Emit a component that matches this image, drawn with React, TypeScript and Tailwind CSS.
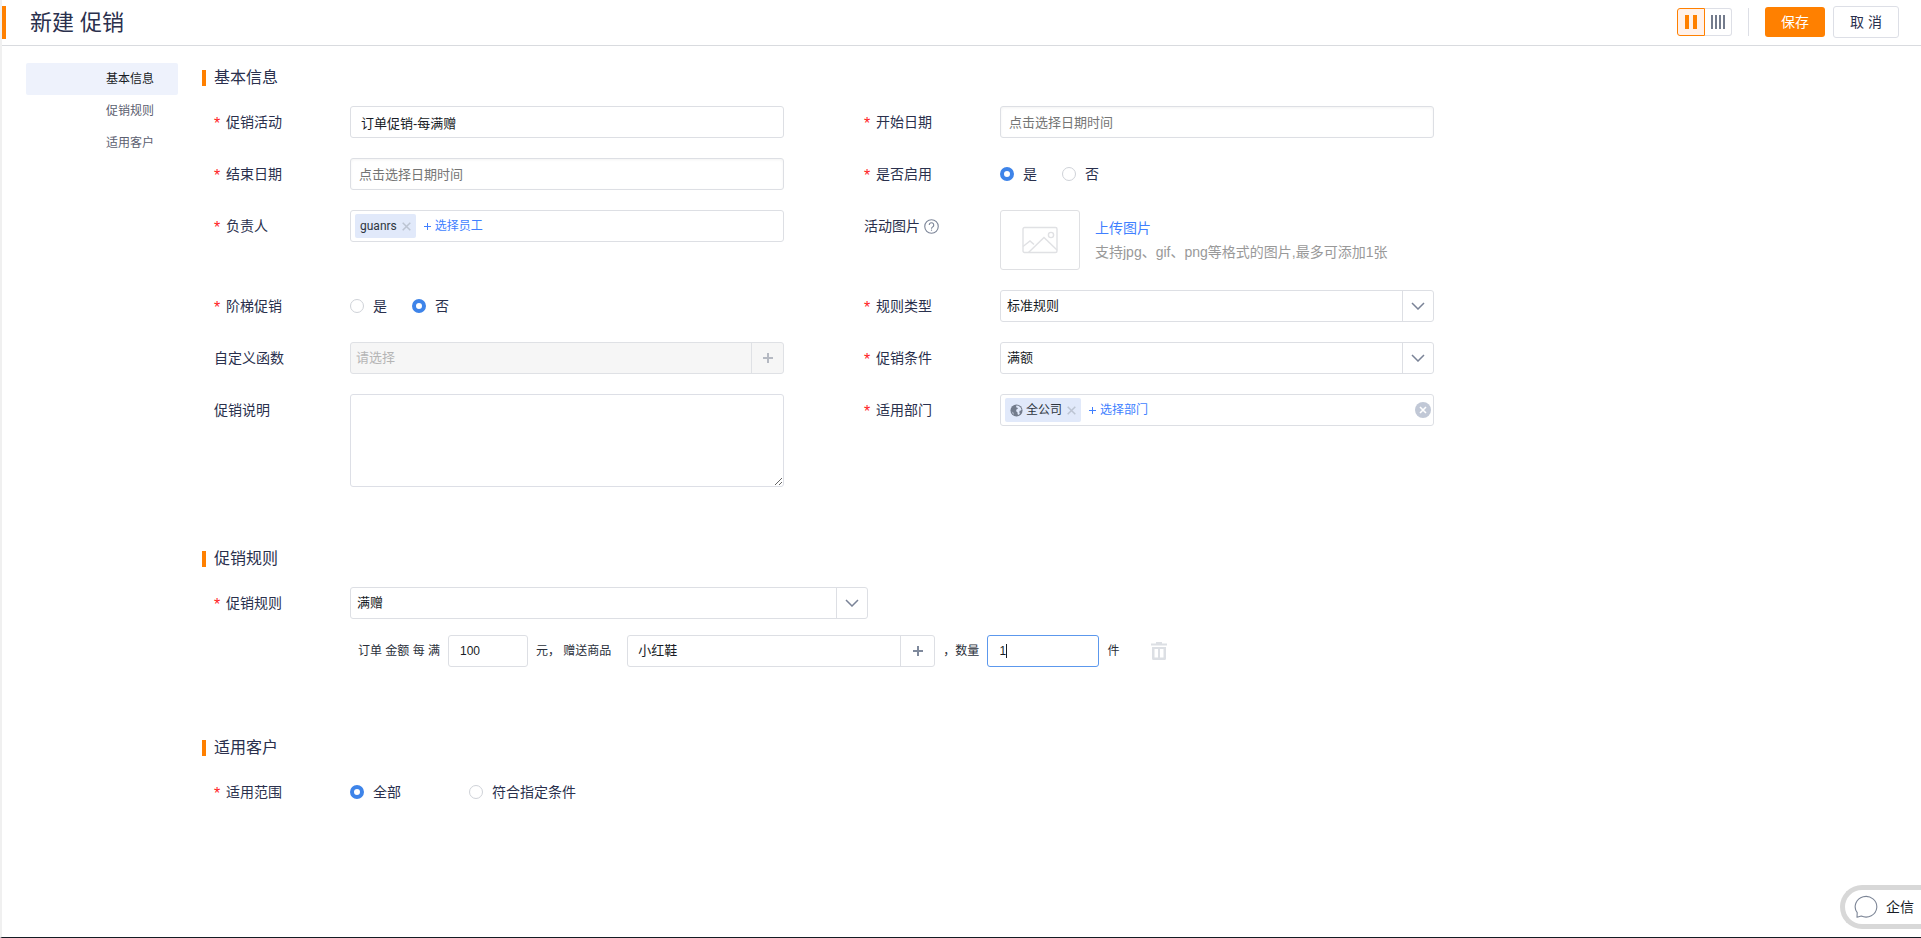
import { useState } from 'react'
import type { ReactNode } from 'react'
import clsx from 'clsx'

const NAV_ITEMS = [
  { id: 'basic', label: '基本信息' },
  { id: 'rules', label: '促销规则' },
  { id: 'customers', label: '适用客户' },
]

const boxClass =
  'h-8 w-full min-w-0 rounded-[3px] border border-[#dddfe4] bg-white text-[#181c25] outline-none focus:border-[#5c98ed]'

function ChevronIcon() {
  return (
    <svg viewBox="0 0 14 8" className="h-2 w-3.5" fill="none" stroke="#7a8397" strokeWidth="1.5">
      <path d="M1 1l6 6 6-6" />
    </svg>
  )
}

function PlusIcon() {
  return (
    <svg viewBox="0 0 12 12" className="h-3 w-3" fill="none" stroke="currentColor" strokeWidth="2">
      <path d="M6 1v10M1 6h10" />
    </svg>
  )
}

function CloseIcon() {
  return (
    <svg viewBox="0 0 9 9" className="h-[9px] w-[9px]" fill="none" stroke="#bcc4d2" strokeWidth="1.5">
      <path d="M0.7 0.7l7.6 7.6M8.3 0.7L0.7 8.3" />
    </svg>
  )
}

function GlobeIcon() {
  return (
    <svg viewBox="0 0 14 14" className="h-[13px] w-[13px]">
      <circle cx="7" cy="7" r="6.5" fill="#737c8c" />
      <path
        d="M6.800 1.600l2.200.2 2.400 1.900 1 2.300-.6 1-1.400.2-.4 1.600.6 1.300-1.200 1.700-1.200-.8-.2-2-1.400-1.200.3-1.800 1.600-.8-.4-1.200-1.500-.5z"
        fill="#e1e9fa"
      />
      <path d="M1.800 8l1.800 1 .8 1.700-.4.900A5.500 5.500 0 0 1 1.800 8z" fill="#a8b0c0" />
    </svg>
  )
}

function HelpIcon() {
  return (
    <svg viewBox="0 0 16 16" className="h-[15px] w-[15px]" fill="none" stroke="#7d8699" strokeWidth="1.2">
      <circle cx="8" cy="8" r="7.2" />
      <path d="M5.600 6.400a2.400 2.400 0 1 1 3.700 2c-.9.6-1.300.9-1.300 1.900" />
      <path d="M8 11.300v1.200" />
    </svg>
  )
}

function PictureIcon() {
  return (
    <svg viewBox="0 0 36 28" className="h-7 w-9" fill="none" stroke="#e0e1e4" strokeWidth="1.4">
      <rect x="1" y="1.500" width="34" height="25" rx="1.500" />
      <circle cx="29" cy="9" r="2.600" />
      <path d="M1 20.500l7-5.500 4 3.500M6.500 26.500L22 11.500l13 12.500" />
    </svg>
  )
}

function TrashIcon() {
  return (
    <svg viewBox="0 0 16 18" className="h-[18px] w-4" fill="#dcdfe4">
      <path d="M5 0h6v1.500h5V3.500H0V1.500h5z" />
      <path
        d="M1 5h14v11.500a1.500 1.500 0 0 1-1.500 1.500h-11A1.500 1.500 0 0 1 1 16.500zM3.500 7v8.500H7V7zM9 7v8.500h3.500V7z"
        fillRule="evenodd"
      />
    </svg>
  )
}

function ClearIcon() {
  return (
    <svg viewBox="0 0 16 16" className="h-4 w-4">
      <circle cx="8" cy="8" r="8" fill="#c1c8d6" />
      <path d="M5 5l6 6M11 5l-6 6" stroke="#fff" strokeWidth="1.600" />
    </svg>
  )
}

function ChatIcon() {
  return (
    <svg viewBox="0 0 24 24" className="h-6 w-6" fill="none" stroke="#7c8596" strokeWidth="1.100">
      <path d="M3.200 17.700A10.800 10.300 0 1 1 7.300 21L3 22.300z" strokeLinejoin="round" />
    </svg>
  )
}

interface FieldProps {
  label: string
  htmlFor?: string
  required?: boolean
  extra?: ReactNode
  children: ReactNode
}

function Field({ label, htmlFor, required, extra, children }: FieldProps) {
  return (
    <div className="flex items-start">
      <div className="flex h-8 w-[136px] shrink-0 items-center text-sm text-[#2a304d]">
        {required && <span className="w-3 pt-1 text-base leading-4 text-[#ff2222]">*</span>}
        <label htmlFor={htmlFor}>{label}</label>
        {extra}
      </div>
      <div className="min-w-0 flex-1">{children}</div>
    </div>
  )
}

function Section({ id, title, children }: { id: string; title: string; children: ReactNode }) {
  return (
    <section id={id}>
      <h2 className="mb-5 flex h-4 items-center gap-2 text-base text-[#2a304d]">
        <span className="h-4 w-1 bg-[#ff8000]" />
        {title}
      </h2>
      <div className="pl-3">{children}</div>
    </section>
  )
}

function DateInput({ id }: { id: string }) {
  return (
    <input
      id={id}
      type="text"
      placeholder="点击选择日期时间"
      className={clsx(
        boxClass,
        'px-2 text-[13px] shadow-[inset_0_1px_3px_rgba(0,0,0,0.05)] placeholder:text-[#757575]',
      )}
    />
  )
}

function Select({ id, options }: { id: string; options: string[] }) {
  return (
    <div className="relative">
      <select id={id} className={clsx(boxClass, 'appearance-none pr-10 pl-1.5 text-[13px]')}>
        {options.map((o) => (
          <option key={o}>{o}</option>
        ))}
      </select>
      <span className="pointer-events-none absolute inset-y-px right-px flex w-[31px] items-center justify-center border-l border-[#dddfe4]">
        <ChevronIcon />
      </span>
    </div>
  )
}

interface RadioGroupProps {
  name: string
  options: string[]
  initial: string
  wide?: boolean
}

function RadioGroup({ name, options, initial, wide }: RadioGroupProps) {
  const [value, setValue] = useState(initial)
  return (
    <div role="radiogroup" className={clsx('flex h-8 items-center', wide ? 'gap-[68px]' : 'gap-[25px]')}>
      {options.map((o) => (
        <label key={o} className="flex items-center gap-[9px] text-sm text-[#2a304d]">
          <input
            type="radio"
            name={name}
            checked={value === o}
            onChange={() => setValue(o)}
            className="h-3.5 w-3.5 appearance-none rounded-full border border-[#cfd2d8] bg-white checked:border-4 checked:border-[#3e84e9]"
          />
          {o}
        </label>
      ))}
    </div>
  )
}

function Tag({ icon, children }: { icon?: ReactNode; children: string }) {
  return (
    <span className="flex h-6 items-center gap-[5px] rounded-xs bg-[#e1e9fa] px-[5px] font-[Roboto,'Noto_Sans_CJK_SC',sans-serif] text-xs text-[#2f3640]">
      {icon && <span className="-mr-0.5">{icon}</span>}
      {children}
      <button type="button" aria-label={`移除 ${children}`}>
        <CloseIcon />
      </button>
    </span>
  )
}

function AddLink({ children }: { children: string }) {
  return (
    <button type="button" className="flex items-center gap-1 text-xs text-[#407fff]">
      <svg viewBox="0 0 7 7" className="h-[7px] w-[7px]" fill="none" stroke="currentColor">
        <path d="M3.500 0v7M0 3.500h7" />
      </svg>
      {children}
    </button>
  )
}

function QuantityInput({ id }: { id: string }) {
  const [value, setValue] = useState('1')
  const [focused, setFocused] = useState(true)
  return (
    <div className="relative ml-2 w-28">
      <input
        id={id}
        type="text"
        autoFocus
        value={value}
        onChange={(e) => setValue(e.target.value)}
        onFocus={() => setFocused(true)}
        onBlur={() => setFocused(false)}
        className={clsx(boxClass, 'px-[11px] text-xs caret-transparent')}
      />
      {focused && (
        <span
          className="pointer-events-none absolute top-[9px] h-3.5 w-px bg-[#181c25]"
          style={{ left: `calc(12px + ${value.length}ch)` }}
        />
      )}
    </div>
  )
}

export default function App() {
  const [active, setActive] = useState('basic')

  return (
    <div className="flex min-h-screen flex-col border-b border-l-2 border-b-[#151c24] border-l-[#f0f0f0] bg-white font-['Liberation_Sans','Noto_Sans_CJK_SC',sans-serif]">
      <header className="flex h-[46px] items-center border-b border-[#d9dbdf] pr-[22px]">
        <span className="h-[33px] w-1 bg-[#ff8000]" />
        <h1 className="ml-6 flex-1 text-[22px] leading-8 text-[#2a304d]">新建 促销</h1>
        <div className="flex h-11 items-center self-start">
          <div className="flex h-7">
            <button
              type="button"
              aria-label="双列布局"
              className="flex w-7 items-center justify-center gap-1 rounded-l-[3px] border border-[#ff8000] bg-[#fff1ea]"
            >
              <span className="h-3.5 w-1 bg-[#ff8000]" />
              <span className="h-3.5 w-1 bg-[#ff8000]" />
            </button>
            <button
              type="button"
              aria-label="四列布局"
              className="flex w-[27px] items-center justify-center gap-0.5 rounded-r-[3px] border border-l-0 border-[#dddfe6]"
            >
              <span className="h-3.5 w-0.5 bg-[#737b8c]" />
              <span className="h-3.5 w-0.5 bg-[#737b8c]" />
              <span className="h-3.5 w-0.5 bg-[#737b8c]" />
              <span className="h-3.5 w-0.5 bg-[#737b8c]" />
            </button>
          </div>
          <span className="mx-4 h-7 w-px bg-[#dddfe6]" />
          <button type="button" className="h-[30px] w-[60px] rounded-[3px] bg-[#ff8000] text-sm text-white">
            保存
          </button>
          <button
            type="button"
            className="ml-2 h-8 w-[66px] rounded-[3px] border border-[#dddfe6] text-sm text-[#2a304d]"
          >
            取 消
          </button>
        </div>
      </header>

      <div className="flex flex-1 items-start gap-6 pr-6 pl-6">
        <nav className="w-[152px] shrink-0 pt-[17px]">
          {NAV_ITEMS.map((item) => (
            <a
              key={item.id}
              href={`#${item.id}`}
              onClick={() => setActive(item.id)}
              className={clsx(
                'flex h-8 items-center rounded-xs pl-20 text-xs',
                active === item.id ? 'bg-[#eef2fc] text-[#181c25]' : 'text-[#5b6070]',
              )}
            >
              {item.label}
            </a>
          ))}
        </nav>

        <form className="max-w-[1232px] flex-1 pt-6" onSubmit={(e) => e.preventDefault()}>
          <Section id="basic" title="基本信息">
            <div className="grid grid-cols-2 gap-x-20 gap-y-5">
              <Field label="促销活动" htmlFor="name" required>
                <input
                  id="name"
                  type="text"
                  defaultValue="订单促销-每满赠"
                  className={clsx(boxClass, 'px-2.5 text-[13px]')}
                />
              </Field>
              <Field label="开始日期" htmlFor="start" required>
                <DateInput id="start" />
              </Field>

              <Field label="结束日期" htmlFor="end" required>
                <DateInput id="end" />
              </Field>
              <Field label="是否启用" required>
                <RadioGroup name="enabled" options={['是', '否']} initial="是" />
              </Field>

              <Field label="负责人" required>
                <div className="flex h-8 items-center gap-2 rounded-[3px] border border-[#dddfe4] px-1">
                  <Tag>guanrs</Tag>
                  <AddLink>选择员工</AddLink>
                </div>
              </Field>
              <Field
                label="活动图片"
                extra={
                  <button type="button" aria-label="帮助" className="ml-1">
                    <HelpIcon />
                  </button>
                }
              >
                <div className="flex gap-[15px]">
                  <div className="flex h-[60px] w-20 shrink-0 items-center justify-center rounded-[3px] border border-[#dfe0e3]">
                    <PictureIcon />
                  </div>
                  <div className="pt-1.5 text-sm leading-6">
                    <button type="button" className="block text-[#407fff]">
                      上传图片
                    </button>
                    <p className="whitespace-nowrap text-[#999999]">支持jpg、gif、png等格式的图片,最多可添加1张</p>
                  </div>
                </div>
              </Field>

              <Field label="阶梯促销" required>
                <RadioGroup name="ladder" options={['是', '否']} initial="否" />
              </Field>
              <Field label="规则类型" htmlFor="ruleType" required>
                <Select id="ruleType" options={['标准规则']} />
              </Field>

              <Field label="自定义函数" htmlFor="customFn">
                <div className="flex h-8 rounded-[3px] border border-[#dfe1e5] bg-[#f6f6f6]">
                  <input
                    id="customFn"
                    type="text"
                    disabled
                    placeholder="请选择"
                    className="min-w-0 flex-1 px-[5px] text-[13px] placeholder:text-[#b5b5b5]"
                  />
                  <button
                    type="button"
                    disabled
                    aria-label="选择函数"
                    className="flex w-8 items-center justify-center border-l border-[#dfe1e5] text-[#b5b9c2]"
                  >
                    <PlusIcon />
                  </button>
                </div>
              </Field>
              <Field label="促销条件" htmlFor="condition" required>
                <Select id="condition" options={['满额']} />
              </Field>

              <Field label="促销说明" htmlFor="remark">
                <textarea
                  id="remark"
                  className="block h-[93px] w-full resize rounded-[3px] border border-[#dddfe6] p-2 text-[13px] outline-none"
                />
              </Field>
              <Field label="适用部门" required>
                <div className="flex h-8 items-center gap-2 rounded-[3px] border border-[#dddfe4] pr-0.5 pl-1">
                  <Tag icon={<GlobeIcon />}>全公司</Tag>
                  <AddLink>选择部门</AddLink>
                  <button type="button" aria-label="清空" className="ml-auto">
                    <ClearIcon />
                  </button>
                </div>
              </Field>
            </div>
          </Section>

          <div className="pt-16">
            <Section id="rules" title="促销规则">
              <Field label="促销规则" htmlFor="rule" required>
                <div className="max-w-[518px]">
                  <Select id="rule" options={['满赠']} />
                </div>
                <div className="mt-4 flex items-center pl-2 text-xs whitespace-nowrap text-[#2a2f3a]">
                  <label htmlFor="amount">订单 金额 每 满</label>
                  <div className="ml-2 w-20">
                    <input
                      id="amount"
                      type="text"
                      defaultValue="100"
                      className={clsx(boxClass, 'px-[11px] text-xs')}
                    />
                  </div>
                  <label htmlFor="product" className="ml-2">
                    元， 赠送商品
                  </label>
                  <div className="ml-4 flex h-8 w-[308px] rounded-[3px] border border-[#dddfe4]">
                    <input
                      id="product"
                      type="text"
                      defaultValue="小红鞋"
                      className="min-w-0 flex-1 px-2.5 text-[13px] text-[#181c25] outline-none"
                    />
                    <button
                      type="button"
                      aria-label="选择商品"
                      className="flex w-[34px] items-center justify-center border-l border-[#dddfe4] text-[#7f899c]"
                    >
                      <PlusIcon />
                    </button>
                  </div>
                  <label htmlFor="quantity" className="ml-2">
                    ，数量
                  </label>
                  <QuantityInput id="quantity" />
                  <span className="ml-2">件</span>
                  <button type="button" aria-label="删除" className="ml-8">
                    <TrashIcon />
                  </button>
                </div>
              </Field>
            </Section>
          </div>

          <div className="pt-[73px]">
            <Section id="customers" title="适用客户">
              <Field label="适用范围" required>
                <RadioGroup name="scope" options={['全部', '符合指定条件']} initial="全部" wide />
              </Field>
            </Section>
          </div>
        </form>
      </div>

      <button
        type="button"
        className="fixed right-0 bottom-[9px] flex h-11 w-[81px] items-center gap-2 rounded-l-full border-[5px] border-r-0 border-[#d8d8d8] bg-white pl-[9px] text-sm whitespace-nowrap text-[#181c25]"
      >
        <ChatIcon />
        企信
      </button>
    </div>
  )
}
